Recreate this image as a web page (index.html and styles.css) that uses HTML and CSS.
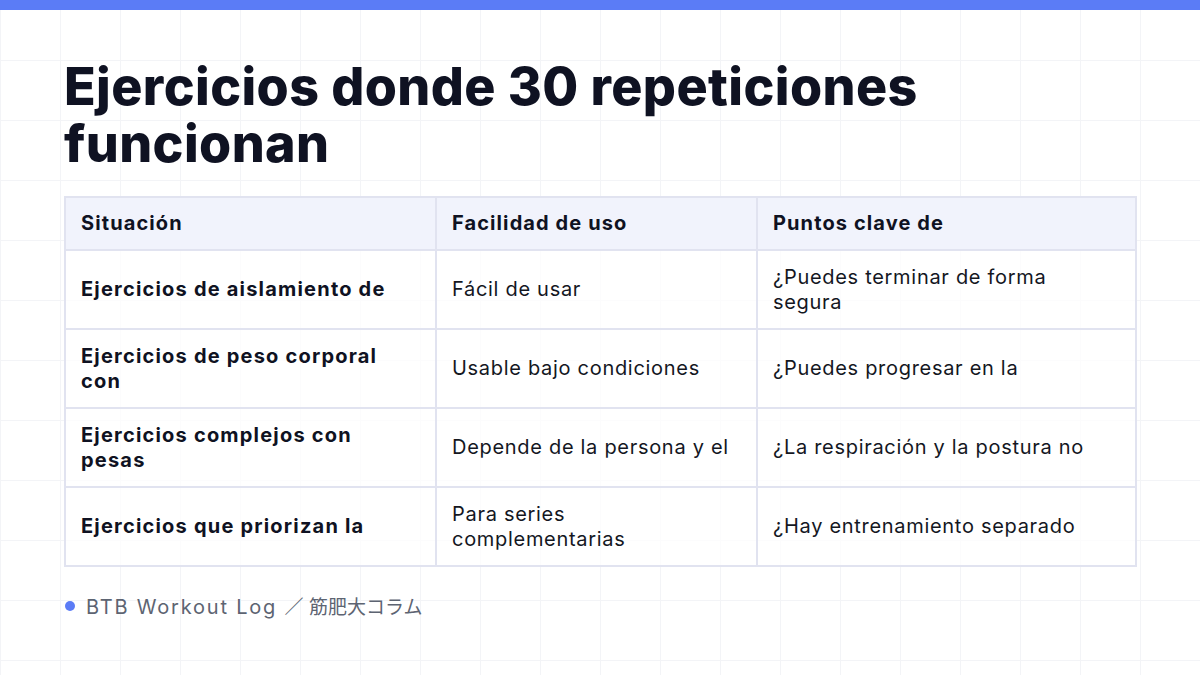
FILE: index.html
```html
<!DOCTYPE html>
<html lang="es">
<head>
<meta charset="utf-8">
<link rel="stylesheet" href="styles.css">
</head>
<body>
<div class="topbar"></div>
<main class="slide">
  <h1 class="title">Ejercicios donde 30 repeticiones funcionan</h1>
  <table class="grid-table">
    <thead>
      <tr><th class="c1">Situación</th><th class="c2">Facilidad de uso</th><th class="c3">Puntos clave de</th></tr>
    </thead>
    <tbody>
      <tr><td class="strong">Ejercicios de aislamiento de</td><td>Fácil de usar</td><td>¿Puedes terminar de forma segura</td></tr>
      <tr><td class="strong">Ejercicios de peso corporal con</td><td>Usable bajo condiciones</td><td>¿Puedes progresar en la</td></tr>
      <tr><td class="strong">Ejercicios complejos con pesas</td><td>Depende de la persona y el</td><td>¿La respiración y la postura no</td></tr>
      <tr><td class="strong">Ejercicios que priorizan la</td><td>Para series complementarias</td><td>¿Hay entrenamiento separado</td></tr>
    </tbody>
  </table>
  <footer class="foot"><span class="dot"></span><span class="foot-text">BTB Workout Log <span class="jp">／ 筋肥大コラム</span></span></footer>
</main>
</body>
</html>
```

FILE: styles.css
```css
* { box-sizing: border-box; }
html, body { margin: 0; padding: 0; }
body {
  width: 1200px;
  height: 675px;
  overflow: hidden;
  font-family: Inter, "Noto Sans CJK JP", sans-serif;
  color: #111827;
  background-color: #ffffff;
  background-image:
    linear-gradient(to right, #f3f4f7 1px, transparent 1px),
    linear-gradient(to bottom, #f3f4f7 1px, transparent 1px);
  background-size: 60px 60px;
  background-position: 0 0;
}
.topbar {
  height: 10px;
  background: #5b7cf6;
}
.slide {
  padding: 48px 64px 0 64px;
}
.title {
  margin: 0;
  font-size: 52px;
  line-height: 57px;
  font-weight: 800;
  letter-spacing: 0.4px;
  color: #0f1222;
  width: 900px;
}
.grid-table {
  margin-top: 24px;
  width: 1071px;
  border-collapse: collapse;
  border: 2px solid #e1e3f0;
  table-layout: fixed;
}
.grid-table th, .grid-table td {
  border: 2px solid #e1e3f0;
  padding: 0 18px 0 15px;
  text-align: left;
  vertical-align: middle;
  font-size: 20px;
  line-height: 25px;
}
.grid-table th {
  height: 53px;
  background: #f1f3fc;
  font-weight: 700;
  letter-spacing: 1.1px;
  color: #0f1222;
}
.grid-table td {
  height: 79px;
  background: rgba(255,255,255,0.7);
  font-weight: 400;
  letter-spacing: 0.7px;
  color: #14171f;
}
.grid-table td.strong { font-weight: 700; letter-spacing: 1.2px; color: #0f1222; }
.c1 { width: 371px; }
.c2 { width: 321px; }
.c3 { width: 379px; }
.foot {
  display: flex;
  align-items: center;
  gap: 11px;
  margin-top: 25px;
  padding-left: 1px;
}
.dot {
  width: 10px;
  height: 10px;
  border-radius: 50%;
  background: #5b7cf6;
}
.foot-text {
  font-size: 20px;
  letter-spacing: 1.8px;
  color: #5d6472;
}
.jp { font-size: 19px; letter-spacing: 0; }
```
